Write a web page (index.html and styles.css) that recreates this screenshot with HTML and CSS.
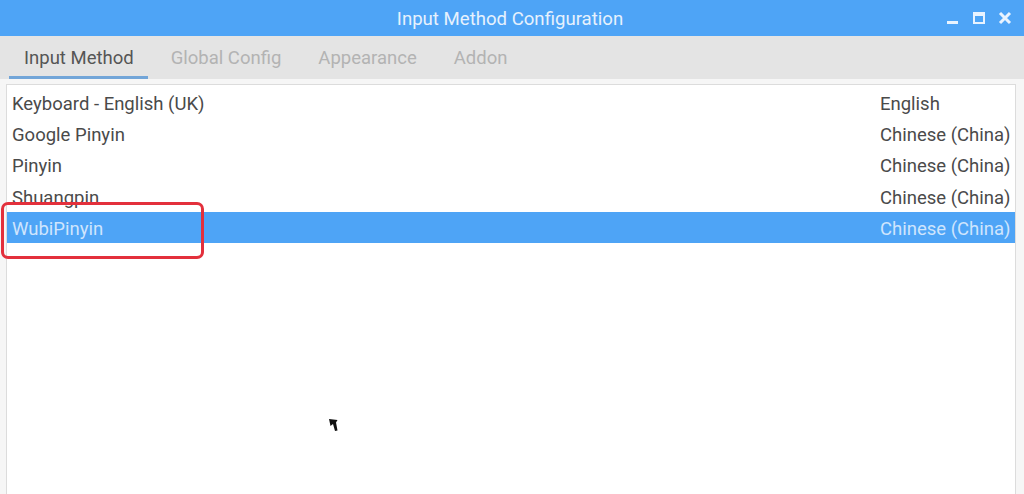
FILE: index.html
```html
<!DOCTYPE html>
<html>
<head>
<meta charset="utf-8">
<link rel="stylesheet" href="styles.css">
</head>
<body>
<div class="window">
  <div class="titlebar">
    <div class="title">Input Method Configuration</div>
    <div class="controls">
      <svg class="ctl" width="14" height="14" viewBox="0 0 14 14"><rect x="1" y="10" width="11" height="3" fill="#e8f3ff"/></svg>
      <svg class="ctl" width="14" height="14" viewBox="0 0 14 14"><rect x="2" y="2" width="10" height="10" fill="none" stroke="#e8f3ff" stroke-width="2"/><rect x="2" y="2" width="10" height="3" fill="#e8f3ff"/></svg>
      <svg class="ctl" width="14" height="14" viewBox="0 0 14 14"><path d="M2 2 L12 12 M12 2 L2 12" stroke="#e8f3ff" stroke-width="3"/></svg>
    </div>
  </div>
  <div class="tabs">
    <div class="tab active">Input Method</div>
    <div class="tab">Global Config</div>
    <div class="tab">Appearance</div>
    <div class="tab">Addon</div>
  </div>
  <div class="content">
    <div class="list">
      <div class="row"><span>Keyboard - English (UK)</span><span>English</span></div>
      <div class="row"><span>Google Pinyin</span><span>Chinese (China)</span></div>
      <div class="row"><span>Pinyin</span><span>Chinese (China)</span></div>
      <div class="row"><span>Shuangpin</span><span>Chinese (China)</span></div>
      <div class="row selected"><span>WubiPinyin</span><span>Chinese (China)</span></div>
      <div class="highlight"></div>
      <svg class="cursor" width="14" height="18" viewBox="0 0 14 18"><path d="M1 1 L9.5 2 L8 4.5 L9.5 12.5 L7 13 L5 6 L2.5 8 Z" fill="#111"/></svg>
    </div>
  </div>
</div>
</body>
</html>
```
FILE: styles.css
```css
html, body {
  margin: 0;
  padding: 0;
  width: 1024px;
  height: 494px;
  overflow: hidden;
  background: #ffffff;
  font-family: Roboto, "Liberation Sans", sans-serif;
}
.window {
  display: flex;
  flex-direction: column;
  height: 494px;
}
.titlebar {
  height: 36px;
  background: #4ea4f6;
  position: relative;
  display: flex;
  align-items: center;
  justify-content: center;
  flex-shrink: 0;
}
.title {
  color: #e6f1fd;
  font-size: 18.6px;
  padding-top: 2px;
  padding-right: 4px;
}
.controls {
  position: absolute;
  right: 12px;
  top: 11px;
  display: flex;
  gap: 12px;
}
.ctl { display: block; }
.tabs {
  height: 43px;
  background: #e4e4e4;
  display: flex;
  padding-left: 9px;
  flex-shrink: 0;
}
.tab {
  font-size: 18.5px;
  color: #b3b3b3;
  padding: 4px 14px 0 15px;
  display: flex;
  align-items: center;
  margin-right: 8px;
  box-sizing: border-box;
  border-bottom: 3px solid transparent;
}
.tab.active {
  color: #555555;
  border-bottom-color: #72a5d8;
}
.content {
  flex: 1;
  background: #f6f6f6;
  padding: 5px 5px 0 6px;
  display: flex;
}
.list {
  flex: 1;
  background: #ffffff;
  border: 1px solid #dcdcdc;
  border-bottom: none;
  padding-top: 2px;
  position: relative;
  margin-right: 3px;
}
.row {
  height: 31.3px;
  box-sizing: border-box;
  padding-top: 2px;
  display: grid;
  grid-template-columns: 868px 1fr;
  align-items: center;
  padding-left: 5px;
  font-size: 18.5px;
  color: #4a4a4a;
}
.row.selected {
  background: #4ea4f6;
  color: #cfe5fd;
}
.highlight {
  position: absolute;
  left: -6px;
  top: 117px;
  width: 197px;
  height: 51px;
  border: 3px solid #e3303c;
  border-radius: 7px;
}
.cursor {
  position: absolute;
  left: 321px;
  top: 333px;
}
```
